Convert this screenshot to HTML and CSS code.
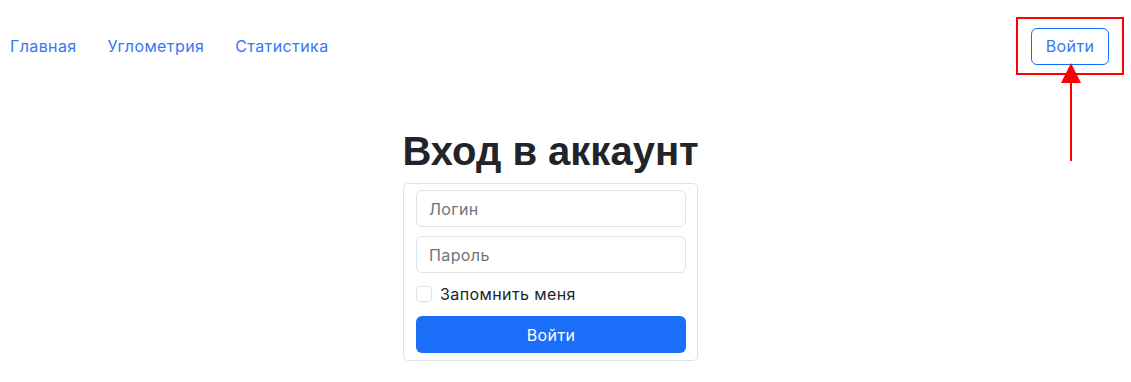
FILE: index.html
```html
<!DOCTYPE html>
<html lang="ru">
<head>
<meta charset="utf-8">
<title>Вход в аккаунт</title>
<link rel="stylesheet" href="styles.css">
</head>
<body>
<header class="topbar">
  <nav class="nav">
    <a class="nav-link" href="#">Главная</a>
    <a class="nav-link" href="#">Углометрия</a>
    <a class="nav-link" href="#">Статистика</a>
  </nav>
  <div class="login-wrap">
    <a class="btn-outline" href="#">Войти</a>
    <span class="highlight"></span>
    <svg class="arrow" width="24" height="100" viewBox="0 0 24 100">
      <polygon points="12,0 2,20 22,20" fill="#ff0000"/>
      <rect x="11" y="14" width="2" height="84" fill="#ff0000"/>
    </svg>
  </div>
</header>
<main class="main">
  <h1 class="title">Вход в аккаунт</h1>
  <form class="card">
    <input class="field" type="text" placeholder="Логин">
    <input class="field" type="password" placeholder="Пароль">
    <label class="check"><span class="box"></span>Запомнить меня</label>
    <button class="btn-primary" type="button">Войти</button>
  </form>
</main>
</body>
</html>
```
FILE: styles.css
```css
* { box-sizing: border-box; }
body {
  margin: 0;
  background: #fff;
  font-family: "Inter", "Noto Sans", sans-serif;
  color: #212529;
  letter-spacing: 0.4px;
}
.topbar {
  display: flex;
  justify-content: space-between;
  align-items: center;
  padding: 27px 22px 0 10px;
  height: 65px;
}
.nav { display: flex; gap: 31px; }
.nav-link {
  color: #3478f4;
  text-decoration: none;
  font-size: 16px;
}
.login-wrap { position: relative; }
.btn-outline {
  display: block;
  width: 78px;
  height: 37px;
  line-height: 35px;
  text-align: center;
  border: 1px solid #0d6efd;
  border-radius: 6px;
  color: #3478f4;
  text-decoration: none;
  font-size: 16px;
}
.highlight {
  position: absolute;
  left: -15px;
  top: -11px;
  width: 108px;
  height: 58px;
  border: 2px solid #ff0000;
}
.arrow {
  position: absolute;
  left: 28px;
  top: 35px;
}
.main {
  display: flex;
  flex-direction: column;
  align-items: center;
  padding-top: 62px;
  margin-right: 30px;
}
.title {
  margin: 0 0 8px 0;
  font-family: "Liberation Sans", Arial, sans-serif;
  font-weight: 700;
  font-size: 40px;
  line-height: 48px;
  letter-spacing: 0;
}
.card {
  width: 295px;
  border: 1px solid #dee2e6;
  border-radius: 5px;
  padding: 6px 11px 7px 12px;
  display: flex;
  flex-direction: column;
}
.field {
  height: 37px;
  border: 1px solid #dee2e6;
  border-radius: 6px;
  padding: 0 12px;
  font-family: inherit;
  font-size: 16px;
  letter-spacing: 0.4px;
  color: #212529;
  margin-bottom: 9px;
}
.field::placeholder { color: #6c757d; }
.check {
  display: flex;
  align-items: center;
  gap: 8px;
  font-size: 16px;
  height: 24px;
  margin: 0 0 10px;
}
.box {
  width: 16px;
  height: 16px;
  border: 1px solid #dee2e6;
  border-radius: 4px;
}
.btn-primary {
  height: 37px;
  border: 0;
  border-radius: 6px;
  background: #1a6ef7;
  color: #fff;
  font-family: inherit;
  font-size: 16px;
  letter-spacing: 0.4px;
}
```
